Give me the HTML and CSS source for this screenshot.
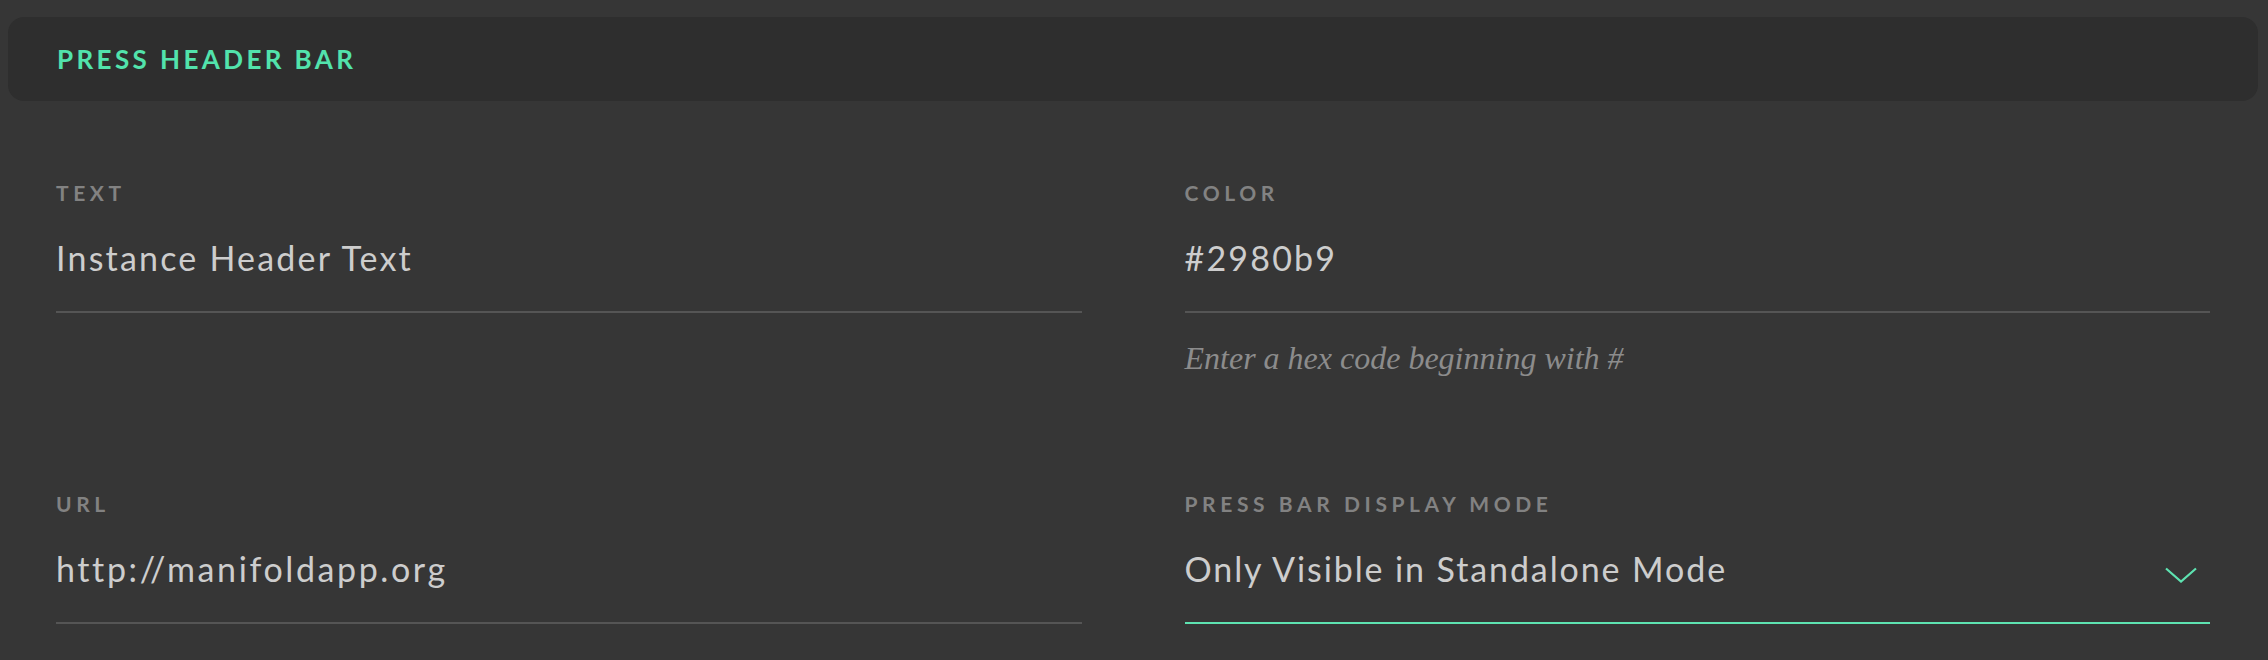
FILE: index.html
```html
<!DOCTYPE html>
<html lang="en">
<head>
<meta charset="utf-8">
<title>Press Header Bar</title>
<link rel="stylesheet" href="styles.css">
</head>
<body>
  <section class="panel">
    <header class="panel-header">
      <h2 class="panel-title">Press Header Bar</h2>
    </header>
    <div class="form-grid">
      <div class="field">
        <label class="field-label">Text</label>
        <div class="field-input">Instance Header Text</div>
      </div>
      <div class="field">
        <label class="field-label">Color</label>
        <div class="field-input">#2980b9</div>
        <p class="field-hint">Enter a hex code beginning with #</p>
      </div>
      <div class="field">
        <label class="field-label">URL</label>
        <div class="field-input field-url">http://manifoldapp.org</div>
      </div>
      <div class="field">
        <label class="field-label">Press Bar Display Mode</label>
        <div class="field-input field-select">
          <span>Only Visible in Standalone Mode</span>
          <svg class="chevron" width="32" height="16" viewBox="0 0 32 16" aria-hidden="true">
            <polyline points="1,1.5 16,14.5 31,1.5" fill="none" stroke="#5ee3b1" stroke-width="2.2"/>
          </svg>
        </div>
      </div>
    </div>
  </section>
</body>
</html>
```

FILE: styles.css
```css
html, body {
  margin: 0;
  padding: 0;
  background: #363636;
}

body {
  font-family: Lato, "Open Sans", sans-serif;
  color: #cccccc;
}

.panel {
  padding-top: 17px;
}

.panel-header {
  margin: 0 10px 0 8px;
  height: 84px;
  background: #2e2e2e;
  border-radius: 16px;
  display: flex;
  align-items: center;
  padding-left: 49px;
}

.panel-title {
  margin: 0;
  font-size: 26px;
  line-height: 31px;
  font-weight: 700;
  text-transform: uppercase;
  letter-spacing: 3.4px;
  color: #52e3ac;
}

.form-grid {
  display: grid;
  grid-template-columns: 1fr 1fr;
  column-gap: 103px;
  row-gap: 115px;
  padding: 79px 58px 0 56px;
}

.field {
  display: flex;
  flex-direction: column;
}

.field-label {
  display: block;
  font-size: 21px;
  line-height: 26px;
  font-weight: 700;
  text-transform: uppercase;
  letter-spacing: 4.6px;
  color: #828282;
}

.field-input {
  margin-top: 31px;
  font-size: 34px;
  line-height: 41px;
  font-weight: 400;
  letter-spacing: 2.2px;
  color: #cdcdcd;
  padding-bottom: 33px;
  border-bottom: 2px solid #555555;
}

.field-url {
  letter-spacing: 2.6px;
}

.field-select {
  display: flex;
  justify-content: space-between;
  align-items: flex-start;
  letter-spacing: 1.9px;
  border-bottom-color: #5ee3b1;
}

.chevron {
  margin-top: 19px;
  margin-right: 13px;
}

.field-hint {
  margin: 27px 0 0;
  font-family: "Liberation Serif", "Times New Roman", serif;
  font-style: italic;
  font-size: 32px;
  line-height: 36px;
  color: #8c8c8c;
}
```
